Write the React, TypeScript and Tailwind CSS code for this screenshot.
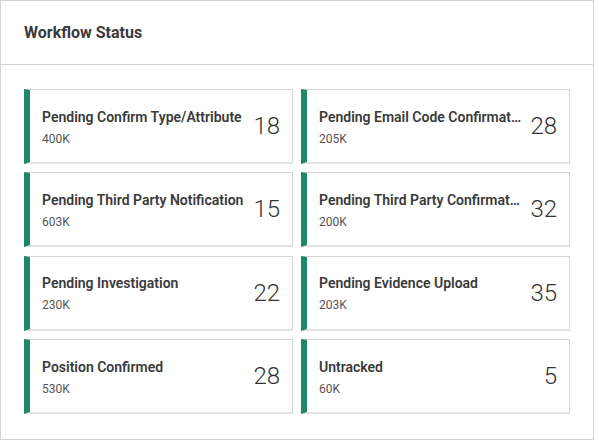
const items = [
  { title: 'Pending Confirm Type/Attribute', sub: '400K', count: 18 },
  { title: 'Pending Email Code Confirmation', sub: '205K', count: 28 },
  { title: 'Pending Third Party Notification', sub: '603K', count: 15 },
  { title: 'Pending Third Party Confirmation', sub: '200K', count: 32 },
  { title: 'Pending Investigation', sub: '230K', count: 22 },
  { title: 'Pending Evidence Upload', sub: '203K', count: 35 },
  { title: 'Position Confirmed', sub: '530K', count: 28 },
  { title: 'Untracked', sub: '60K', count: 5 },
]

export default function App() {
  return (
    <div
      className="w-[594px] h-[440px] bg-white border border-[#d4d4d4] text-[#333]"
      style={{ fontFamily: 'Roboto, "Liberation Sans", sans-serif' }}
    >
      {/* Header */}
      <div className="h-[64px] flex items-center px-[23px] border-b border-[#d4d4d4]">
        <h2 className="text-[16px] font-bold text-[#3a3a3a]">Workflow Status</h2>
      </div>

      {/* Cards */}
      <div className="grid grid-cols-2 gap-x-2 gap-y-[8.4px] pt-6 pl-[23px] pr-[23px]">
        {items.map((item) => (
          <div
            key={item.title}
            className="h-[75px] flex items-center gap-2 bg-white border border-[#d6d6d6] border-b-2 border-b-[#e2e2e2] border-l-[6px] border-l-[#1e8769] pl-3 pr-3"
          >
            <div className="flex-1 min-w-0 pt-[3px]">
              <div className="text-[14px] font-semibold text-[#3a3a3a] truncate leading-4" title={item.title}>
                {item.title}
              </div>
              <div className="text-[12px] text-[#555] mt-[6px] leading-4">{item.sub}</div>
            </div>
            <div className="text-[24px] font-light text-[#333] leading-none">{item.count}</div>
          </div>
        ))}
      </div>
    </div>
  )
}
